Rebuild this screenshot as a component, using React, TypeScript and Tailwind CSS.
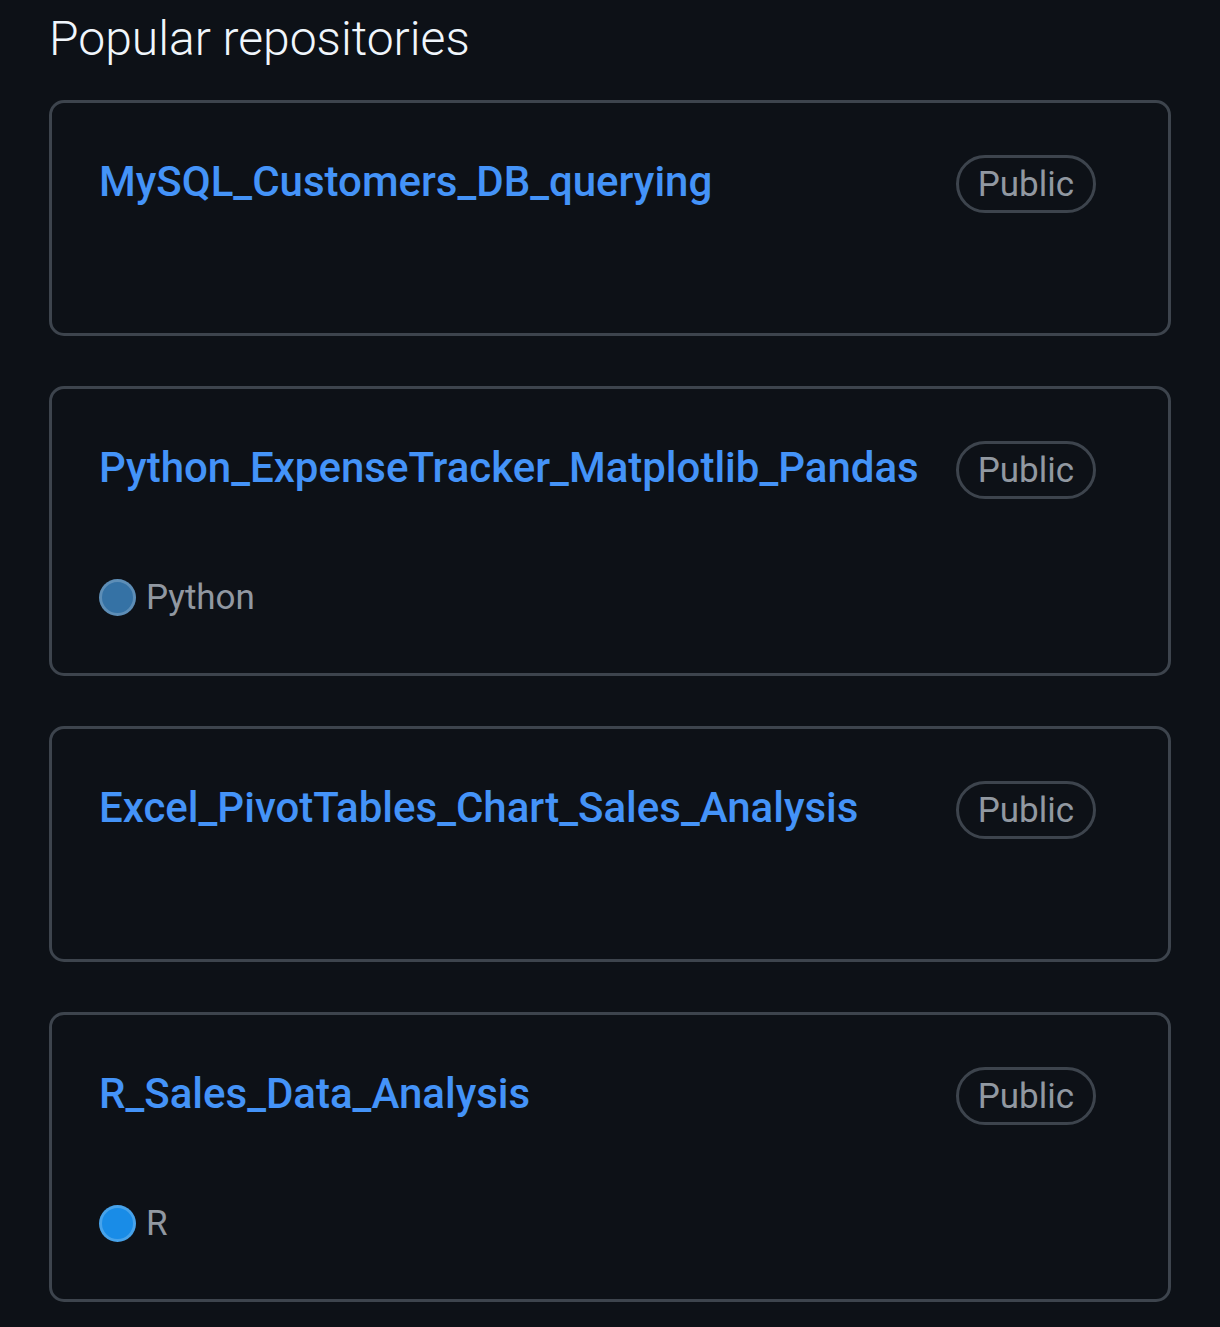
import React from "react";

type Repo = {
  name: string;
  lang?: { name: string; color: string };
};

const repos: Repo[] = [
  { name: "MySQL_Customers_DB_querying" },
  { name: "Python_ExpenseTracker_Matplotlib_Pandas", lang: { name: "Python", color: "#3572A5" } },
  { name: "Excel_PivotTables_Chart_Sales_Analysis" },
  { name: "R_Sales_Data_Analysis", lang: { name: "R", color: "#198CE7" } },
];

function RepoCard({ repo }: { repo: Repo }) {
  return (
    <div className="flex flex-col rounded-[15px] border-[3px] border-[#3d444d] pt-[52px] pb-[49px] pl-[47px] pr-[72px]">
      <div className="flex h-[58px] items-center justify-between gap-4">
        <a href="#" className="whitespace-nowrap pb-[5px] text-[42px] font-medium leading-none text-[#4493f8]">
          {repo.name}
        </a>
        <span className="flex h-[58px] shrink-0 items-center rounded-full border-[3px] border-[#3d444d] px-[19px] text-[35px] leading-none text-[#9198a1]">
          Public
        </span>
      </div>
      <div className="h-[71px]" />
      {repo.lang && (
        <div className="flex h-[54px] items-center gap-[10px]">
          <span
            className="block h-[37px] w-[37px] rounded-full border-[3px] border-white/20"
            style={{ background: repo.lang.color }}
          />
          <span className="text-[35px] leading-none text-[#9198a1]">{repo.lang.name}</span>
        </div>
      )}
    </div>
  );
}

export default function App() {
  return (
    <div
      className="min-h-[1327px] bg-[#0d1117] px-[49px] pt-[15px]"
      style={{ fontFamily: "Roboto, 'Noto Sans', sans-serif" }}
    >
      <h2 className="mb-[37px] text-[48px] font-light leading-none text-[#f0f6fc]">Popular repositories</h2>
      <div className="flex flex-col gap-[50px]">
        {repos.map((r) => (
          <RepoCard key={r.name} repo={r} />
        ))}
      </div>
    </div>
  );
}
